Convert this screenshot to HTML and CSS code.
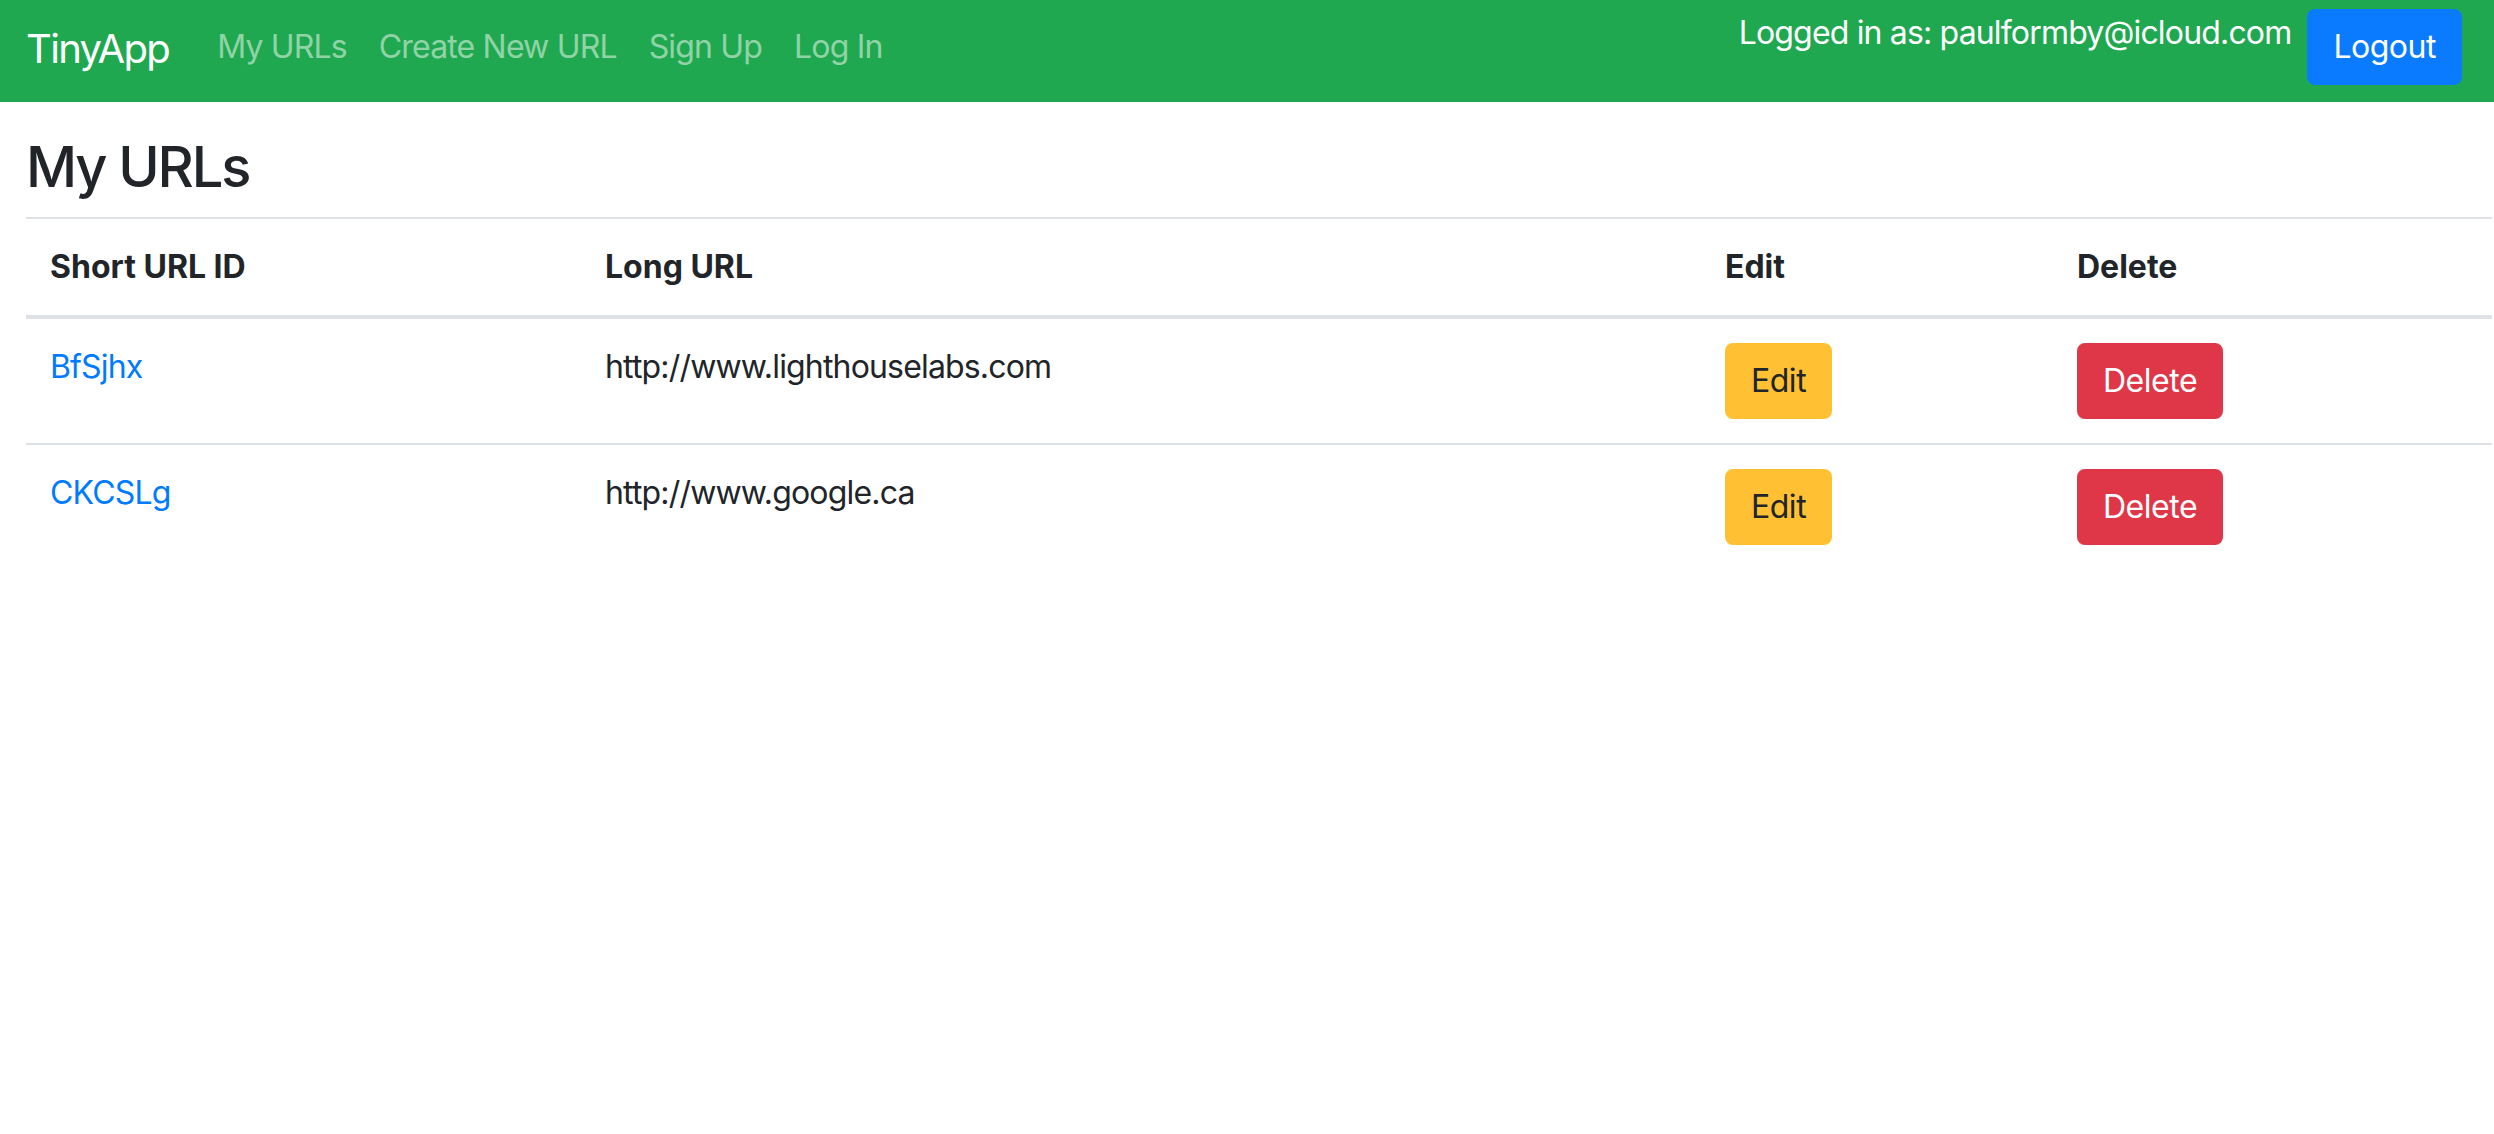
FILE: index.html
```html
<!DOCTYPE html>
<html lang="en">
<head>
<meta charset="utf-8">
<title>TinyApp</title>
<link rel="stylesheet" href="styles.css">
</head>
<body>
<nav class="navbar">
  <a class="brand" href="#">TinyApp</a>
  <ul class="nav-links">
    <li><a class="nav-link" href="#">My URLs</a></li>
    <li><a class="nav-link" href="#">Create New URL</a></li>
    <li><a class="nav-link" href="#">Sign Up</a></li>
    <li><a class="nav-link" href="#">Log In</a></li>
  </ul>
  <div class="user-area">
    <span class="user-label">Logged in as: paulformby@icloud.com</span>
    <form class="logout-form"><button type="button" class="btn btn-primary">Logout</button></form>
  </div>
</nav>
<main class="content">
  <h3 class="page-title">My URLs</h3>
  <table class="url-table">
    <colgroup>
      <col class="col-id">
      <col class="col-long">
      <col class="col-edit">
      <col class="col-delete">
    </colgroup>
    <thead>
      <tr>
        <th>Short URL ID</th>
        <th>Long URL</th>
        <th>Edit</th>
        <th>Delete</th>
      </tr>
    </thead>
    <tbody>
      <tr>
        <td><a class="short-link" href="#">BfSjhx</a></td>
        <td>http://www.lighthouselabs.com</td>
        <td><button type="button" class="btn btn-warning">Edit</button></td>
        <td><button type="button" class="btn btn-danger">Delete</button></td>
      </tr>
      <tr>
        <td><a class="short-link" href="#">CKCSLg</a></td>
        <td>http://www.google.ca</td>
        <td><button type="button" class="btn btn-warning">Edit</button></td>
        <td><button type="button" class="btn btn-danger">Delete</button></td>
      </tr>
    </tbody>
  </table>
</main>
</body>
</html>
```

FILE: styles.css
```css
html, body {
  margin: 0;
  padding: 0;
  background: #ffffff;
}

body {
  font-family: Inter, "Liberation Sans", Arial, sans-serif;
  font-size: 32px;
  line-height: 1.5;
  color: #212529;
  letter-spacing: -0.026em;
}

a {
  text-decoration: none;
}

/* Navbar */
.navbar {
  display: flex;
  align-items: flex-start;
  box-sizing: border-box;
  height: 102px;
  padding: 9px 32px 0 26px;
  background: #1fa84f;
}

.brand {
  display: block;
  padding: 10px 0;
  margin-right: 32px;
  font-size: 40px;
  line-height: 60px;
  letter-spacing: -0.042em;
  color: #ffffff;
}

.nav-links {
  display: flex;
  margin: 0;
  padding: 0;
  list-style: none;
}

.nav-link {
  display: block;
  padding: 14px 16px;
  line-height: 48px;
  color: rgba(255, 255, 255, 0.5);
}

.user-area {
  margin-left: auto;
  display: flex;
  align-items: flex-start;
  gap: 16px;
}

.user-label {
  color: #ffffff;
  line-height: 48px;
}

.logout-form {
  margin: 0;
}

/* Buttons */
.btn {
  display: inline-block;
  font-family: inherit;
  font-size: 32px;
  line-height: 48px;
  font-weight: 400;
  letter-spacing: -0.015em;
  padding: 12px 24px;
  border: 2px solid transparent;
  border-radius: 8px;
  cursor: pointer;
}

.btn-primary {
  background: #0a7bff;
  border-color: #0a7bff;
  color: #ffffff;
}

.btn-warning {
  background: #ffc133;
  border-color: #ffc133;
  color: #212529;
}

.btn-danger {
  background: #df3648;
  border-color: #df3648;
  color: #ffffff;
}

/* Content */
.content {
  padding: 32px 2px 0 26px;
}

.page-title {
  margin: 0 0 16px 0;
  font-size: 56px;
  font-weight: 500;
  line-height: 1.2;
  letter-spacing: -0.038em;
}

.url-table {
  width: 100%;
  border-collapse: collapse;
  table-layout: fixed;
}

.col-id { width: 555px; }
.col-long { width: 1120px; }
.col-edit { width: 352px; }

.url-table th,
.url-table td {
  padding: 24px;
  text-align: left;
  vertical-align: top;
  border-top: 2px solid #dee2e6;
}

.url-table th {
  font-weight: 700;
  letter-spacing: 0;
  border-bottom: 4px solid #dee2e6;
}

.short-link {
  color: #007bff;
}
```
